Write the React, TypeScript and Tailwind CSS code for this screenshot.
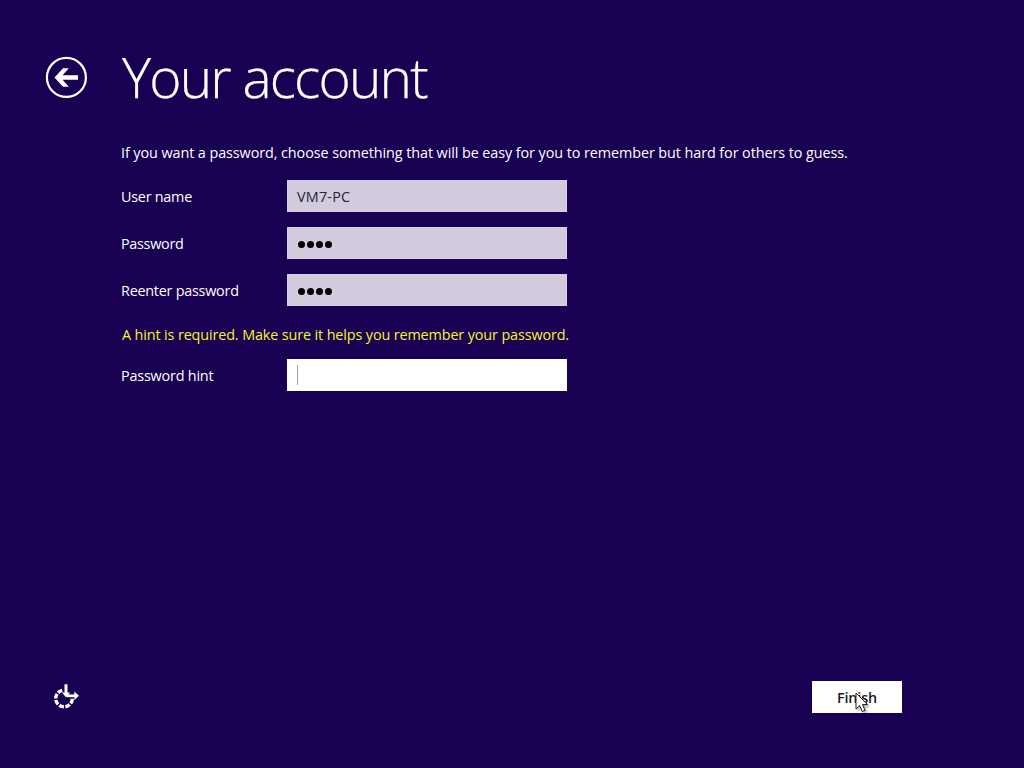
import React from "react";

const labelClass = "w-[166px] shrink-0 whitespace-nowrap pt-[2px]";

function Field({ label, labelTracking, children }: { label: string; labelTracking: string; children?: React.ReactNode }) {
  return (
    <div className="flex h-8 items-center">
      <label className={`${labelClass} ${labelTracking}`}>{label}</label>
      {children}
    </div>
  );
}

function Dots() {
  return (
    <div className="flex h-8 w-[280px] items-center gap-[2px] border border-[#d9cdee] bg-[#d1cbdd] pt-[3px] pl-[10px]">
      {[0, 1, 2, 3].map((i) => (
        <span key={i} className="size-[7px] rounded-full bg-black" />
      ))}
    </div>
  );
}

export default function App() {
  return (
    <div className="relative flex h-[768px] w-[1024px] flex-col overflow-hidden bg-[#180052] font-['Open_Sans','Noto_Sans',sans-serif] text-[14.4px] leading-5 text-white">
      <header className="flex h-[136px] items-start pt-[38px] pl-[45px]">
        <button aria-label="Back" className="mt-[18px] size-[43px]">
          <svg viewBox="0 0 43 43" width="43" height="43">
            <circle cx="21.4" cy="21.4" r="19.5" fill="none" stroke="#fff" strokeWidth="2.2" />
            <path d="M9.5 21.5 18 12.2H23.8L17.6 19.2H33V23.8H17.6L23.8 30.8H18Z" fill="#fff" />
          </svg>
        </button>
        <h1 className="mt-px ml-[34px] text-[55px] leading-[75px] font-light tracking-[-1.8px] whitespace-nowrap text-white [-webkit-text-stroke:0.25px_white]">Your account</h1>
      </header>
      <main className="flex flex-1 flex-col pl-[121px]">
        <p className="mt-[7px] mb-[17px] whitespace-nowrap tracking-[-0.085px]">
          If you want a password, choose something that will be easy for you to remember but hard for others to guess.
        </p>
        <div className="flex flex-col gap-[15px]">
          <Field label="User name" labelTracking="tracking-[-0.25px]">
            <div className="flex h-8 w-[280px] items-center border border-[#d9cdee] bg-[#d1cbdd] pt-[2px] pl-[9px] tracking-[0.2px] text-[#252532]">VM7-PC</div>
          </Field>
          <Field label="Password" labelTracking="tracking-[-0.3px]"><Dots /></Field>
          <Field label="Reenter password" labelTracking="tracking-[-0.25px]"><Dots /></Field>
        </div>
        <p className="mt-[19px] mb-[14px] pl-px whitespace-nowrap tracking-[-0.13px] text-[#f6f42c]">
          A hint is required. Make sure it helps you remember your password.
        </p>
        <Field label="Password hint" labelTracking="tracking-[-0.2px]">
          <div className="flex h-8 w-[280px] items-center bg-white pl-[10px]">
            <span className="h-5 w-px bg-[#a0a0a0]" />
          </div>
        </Field>
      </main>
      <footer className="flex h-[87px] items-start justify-between pr-[122px] pl-[50px]">
        <button aria-label="Ease of access" className="mt-[-1px] size-8">
          <svg viewBox="0 0 32 32" width="32" height="32" fill="none" stroke="#fff">
            <path d="M12.3 10.4A8.3 8.3 0 1 0 22.3 18.6" strokeWidth="3.4" strokeDasharray="4.9 1.5" />
            <path d="M16 4.3V14" strokeWidth="3" />
            <path d="M12 12.6H20L16 17.6Z" fill="#fff" stroke="none" />
            <path d="M17 15.8H26" strokeWidth="2.8" />
            <path d="M24.3 11.6 29 15.8 24.3 20Z" fill="#fff" stroke="none" />
          </svg>
        </button>
        <button className="relative h-8 w-[90px] bg-white pt-[2px] font-semibold tracking-[-0.15px] text-[#181820]">
          Finish
          <svg className="absolute top-[11px] left-[43px] drop-shadow-[2px_2px_1px_rgba(0,0,0,0.3)]" viewBox="0 0 14 21" width="14" height="21">
            <path d="M1 1V17L4.7 13.5 7.2 19.5 10 18.3 7.5 12.5H12.5Z" fill="#fff" stroke="#222" strokeWidth="1" />
          </svg>
        </button>
      </footer>
    </div>
  );
}
